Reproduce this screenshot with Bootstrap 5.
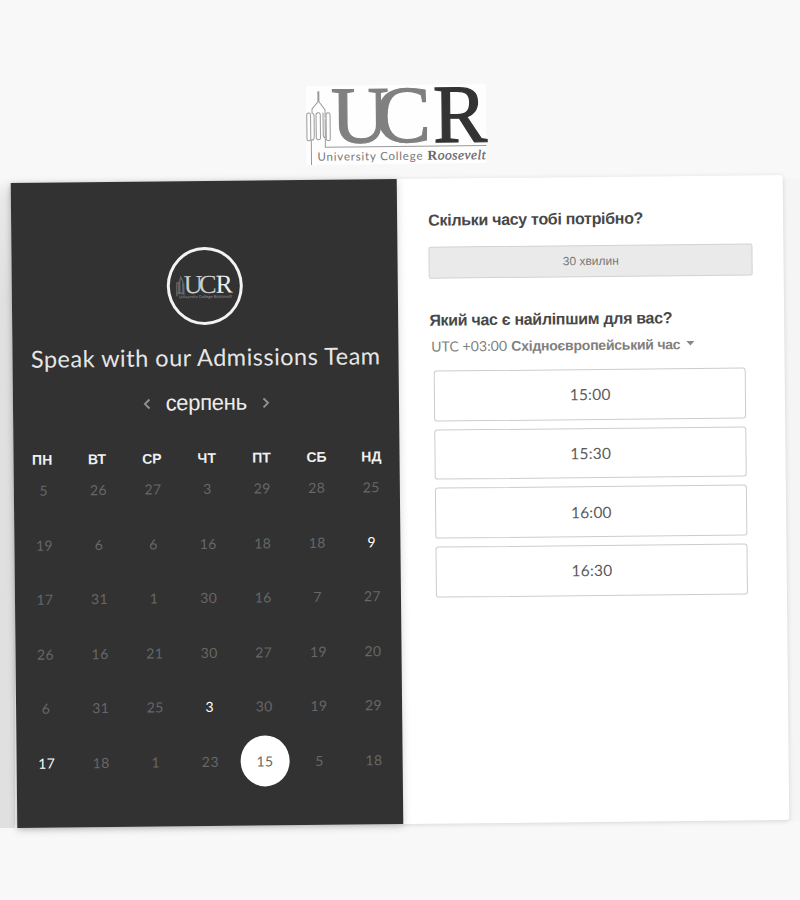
<!DOCTYPE html>
<html lang="uk">
<head>
<meta charset="utf-8">
<meta name="viewport" content="width=device-width, initial-scale=1">
<title>University College Roosevelt</title>
<link href="https://cdn.jsdelivr.net/npm/bootstrap@5.3.0/dist/css/bootstrap.min.css" rel="stylesheet">
<style>
body{background:#f8f8f8;font-family:"Liberation Sans",Arial,sans-serif;width:800px;height:900px;overflow:hidden}
.page{width:800px;height:900px;background:
 linear-gradient(#f8f8f8,#e9e9e9 20px,#e0e0e0 120px,#e0e0e0) 0 178px/15px 650px no-repeat,
 linear-gradient(#f5f5f5,#f5f5f5) 780px 178px/20px 643px no-repeat,#f8f8f8}
.tilt{transform:rotate(-.585deg);transform-origin:400px 501.5px;padding-top:84.5px}
.brand-mark{width:180px;height:79px;overflow:visible}
.booking{width:772px;height:645px;margin:15.5px 0 0 14.2px;background:#fff;border-radius:3px;box-shadow:0 1px 5px rgba(0,0,0,.14)}
.side{width:386px;background:#323232;color:#eee;padding-top:66px;box-shadow:0 2px 8px rgba(0,0,0,.18)}
.avatar{width:76px;height:78px;border:3px solid #f3f3f3}
.title{font:400 23.5px/30px Lato,sans-serif;margin-top:17px;color:#e6e6e6;white-space:nowrap;letter-spacing:.5px}
.month{font-size:22px;line-height:28px;margin-top:17px;color:#ededed;gap:15px;letter-spacing:-.3px}
.days{display:grid;grid-template-columns:repeat(7,1fr)}
.names{font-size:14px;font-weight:700;line-height:16px;margin-top:32.5px;padding:0 1px;color:#f0f0f0}
.dates{grid-auto-rows:54.6px;margin:-4.3px 1.5px 0 2.5px;font:400 14px Lato,sans-serif;letter-spacing:.4px;color:#676767}
.dates .open{color:#fff}
.dates .picked{width:49px;height:51px;background:#fff;color:#666}
.times{width:386px;padding:32px 31px 0}
.ask{font-size:16px;line-height:20px;font-weight:700;color:#484848;margin:0;white-space:nowrap;letter-spacing:-.31px}
.ask-slot{margin-top:32.5px}
.length{height:32px;width:324px;background:#eaeaea;border:1px solid #d2d2d2;border-radius:2px;font-size:12px;color:#777;padding:0;margin-top:15.5px}
.zone{font-size:14px;line-height:20px;color:#808080;margin:5.5px 0 0 1.5px;white-space:nowrap}
.zone b{letter-spacing:-.23px}
.offset{font:400 14px/20px Lato,sans-serif;letter-spacing:.1px}
.slots{gap:7.8px;margin:14.5px 0 0 4px;width:312px}
.slot{height:50.8px;border:1px solid #ccc;border-radius:3px;background:#fff;color:#5c5c5c;font:400 15.5px Lato,sans-serif;letter-spacing:.2px;padding:0}
</style>
</head>
<body>
<main class="page">
<div class="tilt">
 <div class="d-flex justify-content-center">
  <svg class="brand-mark" viewBox="0 0 180 79" role="img">
   <rect width="180" height="79" fill="#fefefe"/>
   <g fill="none" stroke="#999" stroke-width="1"><rect x=".7" y="27" width="3.800" height="28" rx="1.900"/><rect x="10" y="27" width="4.200" height="27" rx="2"/><rect x="20" y="27" width="4" height="28" rx="2"/><path d="M5 79V54q3 1 3-4V29q-1-2-2-2v-4l6-7V5.500M13 16l6 8v8M13 5.500V16M17 27v22q0 3 2 3M19 33V61.500H180"/></g>
   <g font-family="Liberation Serif" fill="#808080" stroke="#808080" stroke-width="1.200">
    <text x="25" y="57" font-size="81" textLength="58" lengthAdjust="spacingAndGlyphs">U</text>
    <text x="69" y="57" font-size="81" textLength="56" lengthAdjust="spacingAndGlyphs">C</text>
    <text x="127" y="57.500" font-size="83" textLength="54" lengthAdjust="spacingAndGlyphs" fill="#333" stroke="#333">R</text>
   </g>
   <text x="11" y="75" font-family="Lato" font-size="11.500" textLength="105" fill="#777">University College</text>
   <text x="121" y="75" font-family="Liberation Serif" font-size="13.500" font-weight="700" fill="#666" textLength="58" lengthAdjust="spacing">R<tspan font-style="italic" font-weight="400" stroke="#666" stroke-width=".3">oosevelt</tspan></text>
  </svg>
 </div>
 <div class="booking d-flex">
  <section class="side">
   <div class="avatar rounded-circle mx-auto d-flex align-items-center justify-content-center">
    <svg width="58" height="27" viewBox="0 0 58 27">
     <path d="M1 23V10l2-1v12M4 21V8l1-4 2 4v13M8 22V10M1 20h7" fill="none" stroke="#666" stroke-width="1.300"/>
     <g font-family="Liberation Serif" font-size="26" fill="#ccc"><text x="8" y="20" textLength="19" lengthAdjust="spacingAndGlyphs">U</text><text x="23" y="20" textLength="18" lengthAdjust="spacingAndGlyphs">C</text><text x="40" y="20" textLength="17" lengthAdjust="spacingAndGlyphs" fill="#eee">R</text></g>
     <text x="3" y="25" font-family="Lato" font-size="4" fill="#999" textLength="53">University College Roosevelt</text>
    </svg>
   </div>
   <div class="title text-center">Speak with our Admissions Team</div>
   <div class="month d-flex justify-content-center align-items-center">
    <svg width="8" height="11" fill="none" stroke="#909090" stroke-width="2"><path d="M6.500 1 2 5.500 6.500 10"/></svg>
    <span class="month-name">серпень</span>
    <svg width="8" height="11" fill="none" stroke="#909090" stroke-width="2"><path d="M1.500 1 6 5.500 1.500 10"/></svg>
   </div>
   <div class="days names text-center"><span>ПН</span><span>ВТ</span><span>СР</span><span>ЧТ</span><span>ПТ</span><span>СБ</span><span>НД</span></div>
   <div class="days dates align-items-center text-center">
    <span>5</span><span>26</span><span>27</span><span>3</span><span>29</span><span>28</span><span>25</span>
    <span>19</span><span>6</span><span>6</span><span>16</span><span>18</span><span>18</span><span class="open">9</span>
    <span>17</span><span>31</span><span>1</span><span>30</span><span>16</span><span>7</span><span>27</span>
    <span>26</span><span>16</span><span>21</span><span>30</span><span>27</span><span>19</span><span>20</span>
    <span>6</span><span>31</span><span>25</span><span class="open">3</span><span>30</span><span>19</span><span>29</span>
    <span class="open">17</span><span>18</span><span>1</span><span>23</span><span class="picked rounded-circle d-flex align-items-center justify-content-center mx-auto">15</span><span>5</span><span>18</span>
   </div>
  </section>
  <section class="times">
   <h2 class="ask">Скільки часу тобі потрібно?</h2>
   <button class="length btn d-block">30 хвилин</button>
   <h2 class="ask ask-slot">Який час є найліпшим для вас?</h2>
   <div class="zone d-flex align-items-center"><span class="offset">UTC +03:00</span><b class="ms-1">Східноєвропейський час</b><svg class="ms-1" width="10" height="5"><path d="M2 0h8L6 4.500z" fill="#888"/></svg></div>
   <div class="slots d-flex flex-column">
    <button class="slot btn">15:00</button><button class="slot btn">15:30</button><button class="slot btn">16:00</button><button class="slot btn">16:30</button>
   </div>
  </section>
 </div>
</div>
</main>
<script src="https://cdn.jsdelivr.net/npm/bootstrap@5.3.0/dist/js/bootstrap.bundle.min.js"></script>
</body>
</html>
